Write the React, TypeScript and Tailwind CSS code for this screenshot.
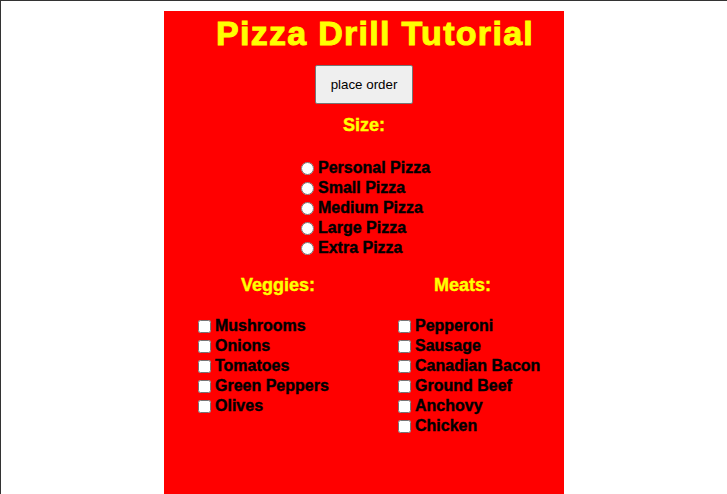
const sizes = ["Personal Pizza", "Small Pizza", "Medium Pizza", "Large Pizza", "Extra Pizza"];
const veggies = ["Mushrooms", "Onions", "Tomatoes", "Green Peppers", "Olives"];
const meats = ["Pepperoni", "Sausage", "Canadian Bacon", "Ground Beef", "Anchovy", "Chicken"];

function Row({ type, label, name }: { type: "radio" | "checkbox"; label: string; name: string }) {
  return (
    <label className="flex items-center h-[20px] gap-[4px] text-[16px] leading-[20px] font-bold text-black">
      <input type={type} name={name} className="m-0 w-[13px] h-[13px]" />
      <span className="[-webkit-text-stroke:0.4px_black]">{label}</span>
    </label>
  );
}

export default function App() {
  return (
    <div
      className="h-[494px] overflow-hidden bg-white border-t border-l border-[#333] pt-[10px] flex flex-col"
      style={{ fontFamily: '"Liberation Sans", Arial, sans-serif' }}
    >
      <main className="w-[400px] mx-auto flex-1 bg-[#ff0000] pt-[3px] flex flex-col">
        <h1 className="text-[34px] leading-[38px] font-bold text-[#ffff00] text-center pl-[22px] tracking-[1.3px] [-webkit-text-stroke:1px_#ffff00]">
          Pizza Drill Tutorial
        </h1>

        <div className="flex justify-center mt-[13px]">
          <button className="bg-[#efefef] border border-[#767676] rounded-[2px] px-[15px] py-[11px] text-[13.33px] leading-[15px] text-black">
            place order
          </button>
        </div>

        <h3 className="mt-[11px] text-[18px] leading-[21px] font-bold text-[#ffff00] text-center [-webkit-text-stroke:0.4px_#ffff00]">
          Size:
        </h3>

        <div className="mt-[22px] pl-[137px] flex flex-col">
          {sizes.map((s) => (
            <Row key={s} type="radio" name="size" label={s} />
          ))}
        </div>

        <div className="flex mt-[17px]">
          <div className="w-[234px] pl-[34px] flex flex-col">
            <h3 className="text-[18px] leading-[21px] font-bold text-[#ffff00] pl-[43px] [-webkit-text-stroke:0.4px_#ffff00]">
              Veggies:
            </h3>
            <div className="mt-[20px] flex flex-col">
              {veggies.map((v) => (
                <Row key={v} type="checkbox" name={v} label={v} />
              ))}
            </div>
          </div>
          <div className="w-[166px] flex flex-col">
            <h3 className="text-[18px] leading-[21px] font-bold text-[#ffff00] pl-[36px] [-webkit-text-stroke:0.4px_#ffff00]">
              Meats:
            </h3>
            <div className="mt-[20px] flex flex-col">
              {meats.map((m) => (
                <Row key={m} type="checkbox" name={m} label={m} />
              ))}
            </div>
          </div>
        </div>
      </main>
    </div>
  );
}
